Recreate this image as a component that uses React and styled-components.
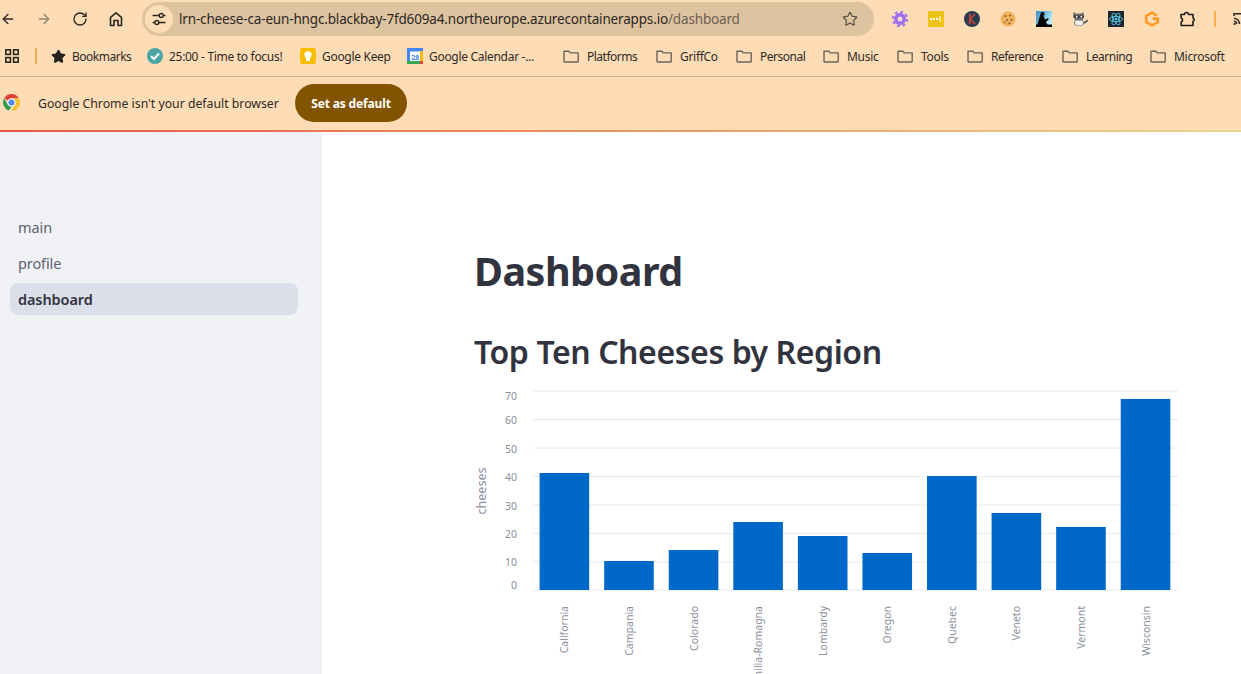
import React from "react";
import styled, { createGlobalStyle } from "styled-components";
import { ArrowLeft, ArrowRight, RotateCw, Star } from "lucide-react";

const Global = createGlobalStyle`
  html, body { margin: 0; padding: 0; background: #fff; overflow: hidden; }
  * { box-sizing: border-box; }
`;

const chromeFont = `"Noto Sans", "Open Sans", sans-serif`;
const appFont = `"Noto Sans", "Open Sans", sans-serif`;

const Page = styled.div`
  width: 1241px;
  height: 674px;
  display: flex;
  flex-direction: column;
  overflow: hidden;
  font-family: ${chromeFont};
`;
const Toolbar = styled.div`
  height: 38px;
  flex: none;
  display: flex;
  align-items: center;
  background: #fedcb6;
`;
const NavGroup = styled.div`
  display: flex;
  gap: 20px;
  align-items: center;
  flex: none;
  color: #2b2722;
`;
const NavIcon = styled.span`
  width: 16px;
  height: 16px;
  display: flex;
  color: ${(p) => (p.$dim ? "#968672" : "#2b2722")};
`;
const Omnibox = styled.div`
  width: 732px;
  height: 34px;
  flex: none;
  margin-left: 18px;
  border-radius: 17px;
  background: #dec3a0;
  display: flex;
  align-items: center;
  padding: 0 16px 0 3px;
`;
const SiteChip = styled.span`
  width: 28px;
  height: 28px;
  border-radius: 50%;
  background: #fedcb6;
  display: flex;
  align-items: center;
  justify-content: center;
  flex: none;
`;
const Url = styled.div`
  margin-left: 6px;
  flex: 1;
  font-size: 13.5px;
  letter-spacing: -0.16px;
  color: #2b2722;
  white-space: nowrap;
`;
const UrlPath = styled.span`
  color: #6b6050;
`;
const ExtRow = styled.div`
  display: flex;
  align-items: center;
  gap: 20px;
  margin-left: 18px;
  flex: none;
`;
const ExtIcon = styled.svg`
  width: 16px;
  height: 16px;
  display: block;
  flex: none;
`;
const Divider = styled.span`
  width: 2px;
  height: 16px;
  background: #fbb04e;
  flex: none;
  margin-left: ${(p) => p.$left || 0}px;
  margin-right: ${(p) => p.$right || 0}px;
`;
const BookmarkBar = styled.div`
  height: 39px;
  flex: none;
  display: flex;
  align-items: center;
  background: #fedcb6;
  border-bottom: 1px solid #cdb59c;
  padding: 0 0 2px 5px;
`;
const Bookmark = styled.div`
  width: ${(p) => p.$w}px;
  margin-left: ${(p) => p.$ml || 0}px;
  flex: none;
  display: flex;
  align-items: center;
  gap: ${(p) => p.$gap}px;
  font-size: 12px;
  letter-spacing: ${(p) => (p.$tight ? "-0.5px" : "-0.3px")};
  color: #2d2a26;
  white-space: nowrap;
`;
const Infobar = styled.div`
  height: 53px;
  flex: none;
  display: flex;
  align-items: center;
  background: #fedcb6;
  padding: 0 0 2px 3px;
`;
const InfoText = styled.div`
  margin-left: 18px;
  padding-top: 1px;
  font-size: 12.25px;
  color: #2d2a26;
  white-space: nowrap;
  width: 257px;
`;
const DefaultButton = styled.div`
  width: 112px;
  height: 38px;
  padding-top: 1px;
  border-radius: 19px;
  background: #835400;
  color: #fff;
  display: flex;
  align-items: center;
  justify-content: center;
  font-size: 12px;
  font-weight: 700;
  letter-spacing: -0.15px;
`;
const Decoration = styled.div`
  height: 2px;
  flex: none;
  background: linear-gradient(90deg, #e8534f, #e9a36a 60%, #e8d78a);
`;
const Body = styled.div`
  flex: 1;
  min-height: 0;
  display: flex;
  font-family: ${appFont};
`;
const Sidebar = styled.nav`
  width: 322px;
  flex: none;
  background: #f0f2f6;
  padding: 79px 24px 0 10px;
  display: flex;
  flex-direction: column;
  gap: 4px;
`;
const NavItem = styled.div`
  height: 32px;
  padding-left: 8px;
  display: flex;
  align-items: center;
  border-radius: 8px;
  font-size: 14.5px;
  letter-spacing: -0.1px;
  background: ${(p) => (p.$active ? "#dbdfe9" : "transparent")};
  color: ${(p) => (p.$active ? "#31333f" : "#5f6272")};
  font-weight: ${(p) => (p.$active ? 600 : 400)};
`;
const Main = styled.main`
  flex: 1;
  min-width: 0;
  padding: 113px 0 0 153px;
  overflow: hidden;
`;
const Title = styled.h1`
  margin: 0 0 0 -1px;
  font-size: 39.5px;
  line-height: 52px;
  font-weight: 700;
  letter-spacing: -0.5px;
  color: #31333f;
`;
const Subtitle = styled.h2`
  margin: 33px 0 6px -1px;
  font-size: 32px;
  line-height: 44px;
  font-weight: 600;
  letter-spacing: -0.42px;
  color: #31333f;
`;
const Chart = styled.svg`
  display: block;
  width: 710px;
  height: 320px;
  overflow: visible;
  font-family: ${appFont};
`;

const Tune = () => (
  <svg width="16" height="16" viewBox="0 0 16 16" fill="none" stroke="#2b2722" strokeWidth="1.4">
    <path d="M1.5 4.5h6.5M12.5 4.5h2M1.5 11.5h2M8 11.5h6.5" />
    <circle cx="10.2" cy="4.5" r="2" />
    <circle cx="5.8" cy="11.5" r="2" />
  </svg>
);
const HomeIcon = () => (
  <svg width="16" height="16" viewBox="0 0 16 16" fill="none" stroke="#2b2722" strokeWidth="1.6" strokeLinejoin="round">
    <path d="M2.5 14.5V6.3L8 1.8l5.5 4.5v8.2H10V9.5H6v5z" />
  </svg>
);
const Apps = () => (
  <svg width="14" height="14" viewBox="0 0 14 14" fill="none" stroke="#2b2722" strokeWidth="1.6">
    <rect x="0.8" y="0.8" width="4.6" height="4.6" />
    <rect x="8.6" y="0.8" width="4.6" height="4.6" />
    <rect x="0.8" y="8.6" width="4.6" height="4.6" />
    <rect x="8.6" y="8.6" width="4.6" height="4.6" />
  </svg>
);
const FolderIcon = () => (
  <ExtIcon viewBox="0 0 16 16">
    <path
      d="M1 3.2h4.8l1.6 1.7h7.8v8.3a.8.8 0 0 1-.8.8H1.8a.8.8 0 0 1-.8-.8z"
      fill="none"
      stroke="#6a645b"
      strokeWidth="1.4"
      strokeLinejoin="round"
    />
  </ExtIcon>
);
const Tomato = () => (
  <ExtIcon viewBox="0 0 16 16">
    <circle cx="8" cy="8" r="8" fill="#4aa5a5" />
    <path d="M4 8.2l3 2.8 5-5.5" stroke="#fff" strokeWidth="2" fill="none" />
  </ExtIcon>
);
const Keep = () => (
  <ExtIcon viewBox="0 0 16 16">
    <rect width="16" height="16" rx="2.5" fill="#fbbc04" />
    <circle cx="8" cy="6.8" r="3.6" fill="#fff" />
    <rect x="6" y="10" width="4" height="3" fill="#fff" />
  </ExtIcon>
);
const Calendar = () => (
  <ExtIcon viewBox="0 0 16 16">
    <rect width="16" height="16" fill="#fff" />
    <rect width="16" height="3.5" fill="#4285f4" />
    <rect width="3" height="16" fill="#4285f4" />
    <rect y="13" width="13" height="3" fill="#34a853" />
    <rect x="13" y="3" width="3" height="10" fill="#fbbc04" />
    <rect x="13" y="13" width="3" height="3" fill="#ea4335" />
    <text x="8" y="11.5" textAnchor="middle" fontSize="7.5" fontWeight="700" fill="#4285f4" fontFamily="Noto Sans">28</text>
  </ExtIcon>
);
const ChromeLogo = () => (
  <svg width="17" height="17" viewBox="0 0 16 16" style={{ display: "block", flex: "none" }}>
    <path d="M8 0a8 8 0 0 1 6.93 4H8a4 4 0 0 0-3.46 2L1.07 4A8 8 0 0 1 8 0z" fill="#e0413a" />
    <path d="M1.07 4l3.47 6A4 4 0 0 0 8 12l-2.5 3.6A8 8 0 0 1 1.07 4z" fill="#2f9e4f" />
    <path d="M14.93 4A8 8 0 0 1 8 16l3.46-6A4 4 0 0 0 8 4z" fill="#f5c22e" />
    <circle cx="8" cy="8" r="3.4" fill="#4c8bf5" stroke="#fff" strokeWidth="0.9" />
  </svg>
);
const Gear = () => (
  <ExtIcon viewBox="0 0 16 16">
    <circle cx="8" cy="8" r="7" fill="none" stroke="#a97cf0" strokeWidth="2.6" strokeDasharray="2.9 2.6" />
    <circle cx="8" cy="8" r="4.2" fill="none" stroke="#9d6df0" strokeWidth="3.4" />
    <circle cx="8" cy="8" r="1.9" fill="#f4dcdc" />
  </ExtIcon>
);
const Pass = () => (
  <ExtIcon viewBox="0 0 16 16">
    <rect width="16" height="16" rx="1.5" fill="#efc311" />
    <rect x="2" y="7" width="2" height="2" fill="#fff" />
    <rect x="5" y="7" width="2" height="2" fill="#fff" />
    <rect x="8" y="7" width="2" height="2" fill="#fff" />
    <rect x="11.5" y="5" width="1" height="6" fill="#fff" />
  </ExtIcon>
);
const KBadge = () => (
  <ExtIcon viewBox="0 0 16 16">
    <circle cx="8" cy="8" r="8" fill="#2a3b50" />
    <path d="M5.8 3v10M10.8 3L6.2 8l4.8 5" stroke="#c5443f" strokeWidth="1.8" fill="none" />
  </ExtIcon>
);
const Cookie = () => (
  <ExtIcon viewBox="0 0 16 16">
    <circle cx="8" cy="8" r="7.5" fill="#eeb25c" />
    <g fill="#96531f">
      <circle cx="5.5" cy="5" r="1" />
      <circle cx="10" cy="4.5" r="0.9" />
      <circle cx="11.5" cy="9" r="1.1" />
      <circle cx="7" cy="9" r="0.9" />
      <circle cx="5" cy="11.5" r="0.8" />
      <circle cx="9.5" cy="12.3" r="1" />
    </g>
  </ExtIcon>
);
const Kindle = () => (
  <ExtIcon viewBox="0 0 16 16">
    <defs>
      <linearGradient id="kgrad" x1="0" y1="0" x2="1" y2="0.6">
        <stop offset="0" stopColor="#2f8fc4" />
        <stop offset="1" stopColor="#bdeefa" />
      </linearGradient>
    </defs>
    <rect width="16" height="16" fill="url(#kgrad)" />
    <path d="M0 13.5h16V16H0zM4.5 3a2 2 0 1 1 3 1.7L9 8.5l3.5-1.5v1.4L9.8 11 11.5 13.5H1.5L3.5 6.5z" fill="#050505" />
  </ExtIcon>
);
const Raccoon = () => (
  <ExtIcon viewBox="0 0 16 16">
    <path d="M1.5 1l2.5 1.5h5L11.5 1l.5 5-1.2 2.2 1 4.8L9.5 15h-5L2 13l1-4.8L1 6z" fill="#6f6f6f" />
    <path d="M3.5 9.5h7l.5 3.5-2 1.5H5L3 13z" fill="#f5f2ee" />
    <path d="M2 4.5h10v2.5H2z" fill="#38383a" />
    <circle cx="4.7" cy="5.8" r="1" fill="#eee" />
    <circle cx="9.3" cy="5.8" r="1" fill="#eee" />
    <path d="M11.5 11l4.3-2.5v2l-3.8 2.5z" fill="#555" />
  </ExtIcon>
);
const ReactLogo = () => (
  <ExtIcon viewBox="0 0 16 16">
    <rect width="16" height="16" fill="#20232a" />
    <g fill="none" stroke="#61dafb" strokeWidth="0.8">
      <ellipse cx="8" cy="8" rx="6.5" ry="2.6" />
      <ellipse cx="8" cy="8" rx="6.5" ry="2.6" transform="rotate(60 8 8)" />
      <ellipse cx="8" cy="8" rx="6.5" ry="2.6" transform="rotate(120 8 8)" />
    </g>
    <circle cx="8" cy="8" r="1.3" fill="#61dafb" />
  </ExtIcon>
);
const GLogo = () => (
  <ExtIcon viewBox="0 0 16 16">
    <path d="M12.8 4.3L8 1.6 2.2 4.8v6.4L8 14.4l5.8-3.2V7.6H8.6" fill="none" stroke="#fb9a24" strokeWidth="2.6" strokeLinejoin="round" />
  </ExtIcon>
);
const PuzzleIcon = () => (
  <ExtIcon viewBox="0 0 16 16">
    <path
      d="M1 3.5h3.5a2 2 0 0 1 4 0H13v3.4a1.8 1.8 0 0 1 0 3.4v4.2H1.2v-3.6a2 2 0 0 0 0-3.8z"
      fill="none"
      stroke="#1f1c18"
      strokeWidth="1.6"
      strokeLinejoin="round"
    />
  </ExtIcon>
);
const Cast = () => (
  <ExtIcon viewBox="0 0 16 16">
    <g fill="none" stroke="#2b2722" strokeWidth="1.5">
      <path d="M1 5V2.8h14V13H8" />
      <path d="M1 7.2a6 6 0 0 1 5.5 5.8M1 10.2A3 3 0 0 1 3.7 13" />
    </g>
    <circle cx="1.6" cy="13" r="1.1" fill="#2b2722" />
  </ExtIcon>
);

const extensions = [Gear, Pass, KBadge, Cookie, Kindle, Raccoon, ReactLogo, GLogo, PuzzleIcon];

const folder = <FolderIcon />;
const bookmarks = [
  { label: "Bookmarks", icon: <Star size={15} fill="#26231f" color="#26231f" />, w: 96, gap: 6, ml: 14, tight: true },
  { label: "25:00 - Time to focus!", icon: <Tomato />, w: 153, gap: 6 },
  { label: "Google Keep", icon: <Keep />, w: 107, gap: 6 },
  { label: "Google Calendar -...", icon: <Calendar />, w: 156, gap: 6 },
  { label: "Platforms", icon: folder, w: 93, gap: 8, tight: true },
  { label: "GriffCo", icon: folder, w: 80, gap: 8 },
  { label: "Personal", icon: folder, w: 87, gap: 8, tight: true },
  { label: "Music", icon: folder, w: 74, gap: 8 },
  { label: "Tools", icon: folder, w: 70, gap: 8 },
  { label: "Reference", icon: folder, w: 95, gap: 8, tight: true },
  { label: "Learning", icon: folder, w: 88, gap: 8, tight: true },
  { label: "Microsoft", icon: folder, w: 80, gap: 8 },
];

const nav = [
  { label: "main" },
  { label: "profile" },
  { label: "dashboard", active: true },
];

const regions = [
  ["California", 473],
  ["Campania", 561],
  ["Colorado", 550],
  ["Emilia-Romagna", 522],
  ["Lombardy", 536],
  ["Oregon", 553],
  ["Quebec", 476],
  ["Veneto", 513],
  ["Vermont", 527],
  ["Wisconsin", 399],
];
const OX = 475;
const OY = 380;
const axisColor = "#8b8e9c";
const gridYs = [391, 419.5, 448, 476.5, 505, 533.5, 562, 590];
const ticks = [
  ["70", 396],
  ["60", 420],
  ["50", 449],
  ["40", 477],
  ["30", 506],
  ["20", 534],
  ["10", 562],
  ["0", 585],
];

const BarChart = () => (
  <Chart viewBox="0 0 710 320">
    {gridYs.map((y) => (
      <line key={y} x1={533 - OX} x2={1178 - OX} y1={y - OY} y2={y - OY} stroke="#e6eaf1" strokeWidth="1" />
    ))}
    {ticks.map(([t, y]) => (
      <text key={t} x={517 - OX} y={y - OY + 4} textAnchor="end" fontSize="10.5" fill={axisColor}>
        {t}
      </text>
    ))}
    <text
      transform={`translate(${486 - OX} ${491 - OY}) rotate(-90)`}
      textAnchor="middle"
      fontSize="12.5"
      fill={axisColor}
    >
      cheeses
    </text>
    {regions.map(([name, top], i) => {
      const x = 539.6 + i * 64.57;
      return (
        <g key={name}>
          <rect x={x - OX} y={top - OY} width="49.6" height={590 - top} fill="#0068c9" />
          <text
            transform={`translate(${x + 24.8 + 4 - OX} ${606 - OY}) rotate(-90)`}
            textAnchor="end"
            fontSize="10.5"
            fill={axisColor}
          >
            {name}
          </text>
        </g>
      );
    })}
  </Chart>
);

export default function App() {
  return (
    <Page>
      <Global />
      <Toolbar>
        <NavGroup>
          <NavIcon><ArrowLeft size={16} strokeWidth={2} /></NavIcon>
          <NavIcon $dim><ArrowRight size={16} strokeWidth={2} /></NavIcon>
          <NavIcon><RotateCw size={16} strokeWidth={2} /></NavIcon>
          <NavIcon><HomeIcon /></NavIcon>
        </NavGroup>
        <Omnibox>
          <SiteChip><Tune /></SiteChip>
          <Url>
            lrn-cheese-ca-eun-hngc.blackbay-7fd609a4.northeurope.azurecontainerapps.io
            <UrlPath>/dashboard</UrlPath>
          </Url>
          <Star size={16} strokeWidth={1.8} color="#5c5347" />
        </Omnibox>
        <ExtRow>
          {extensions.map((Icon, i) => (
            <Icon key={i} />
          ))}
        </ExtRow>
        <Divider $left={18} $right={17} />
        <Cast />
      </Toolbar>
      <BookmarkBar>
        <Apps />
        <Divider $left={16} />
        {bookmarks.map((b) => (
          <Bookmark key={b.label} $w={b.w} $gap={b.gap} $ml={b.ml} $tight={b.tight}>
            {b.icon}
            <span>{b.label}</span>
          </Bookmark>
        ))}
      </BookmarkBar>
      <Infobar>
        <ChromeLogo />
        <InfoText>Google Chrome isn't your default browser</InfoText>
        <DefaultButton>Set as default</DefaultButton>
      </Infobar>
      <Decoration />
      <Body>
        <Sidebar>
          {nav.map((n) => (
            <NavItem key={n.label} $active={n.active}>
              {n.label}
            </NavItem>
          ))}
        </Sidebar>
        <Main>
          <Title>Dashboard</Title>
          <Subtitle>Top Ten Cheeses by Region</Subtitle>
          <BarChart />
        </Main>
      </Body>
    </Page>
  );
}
